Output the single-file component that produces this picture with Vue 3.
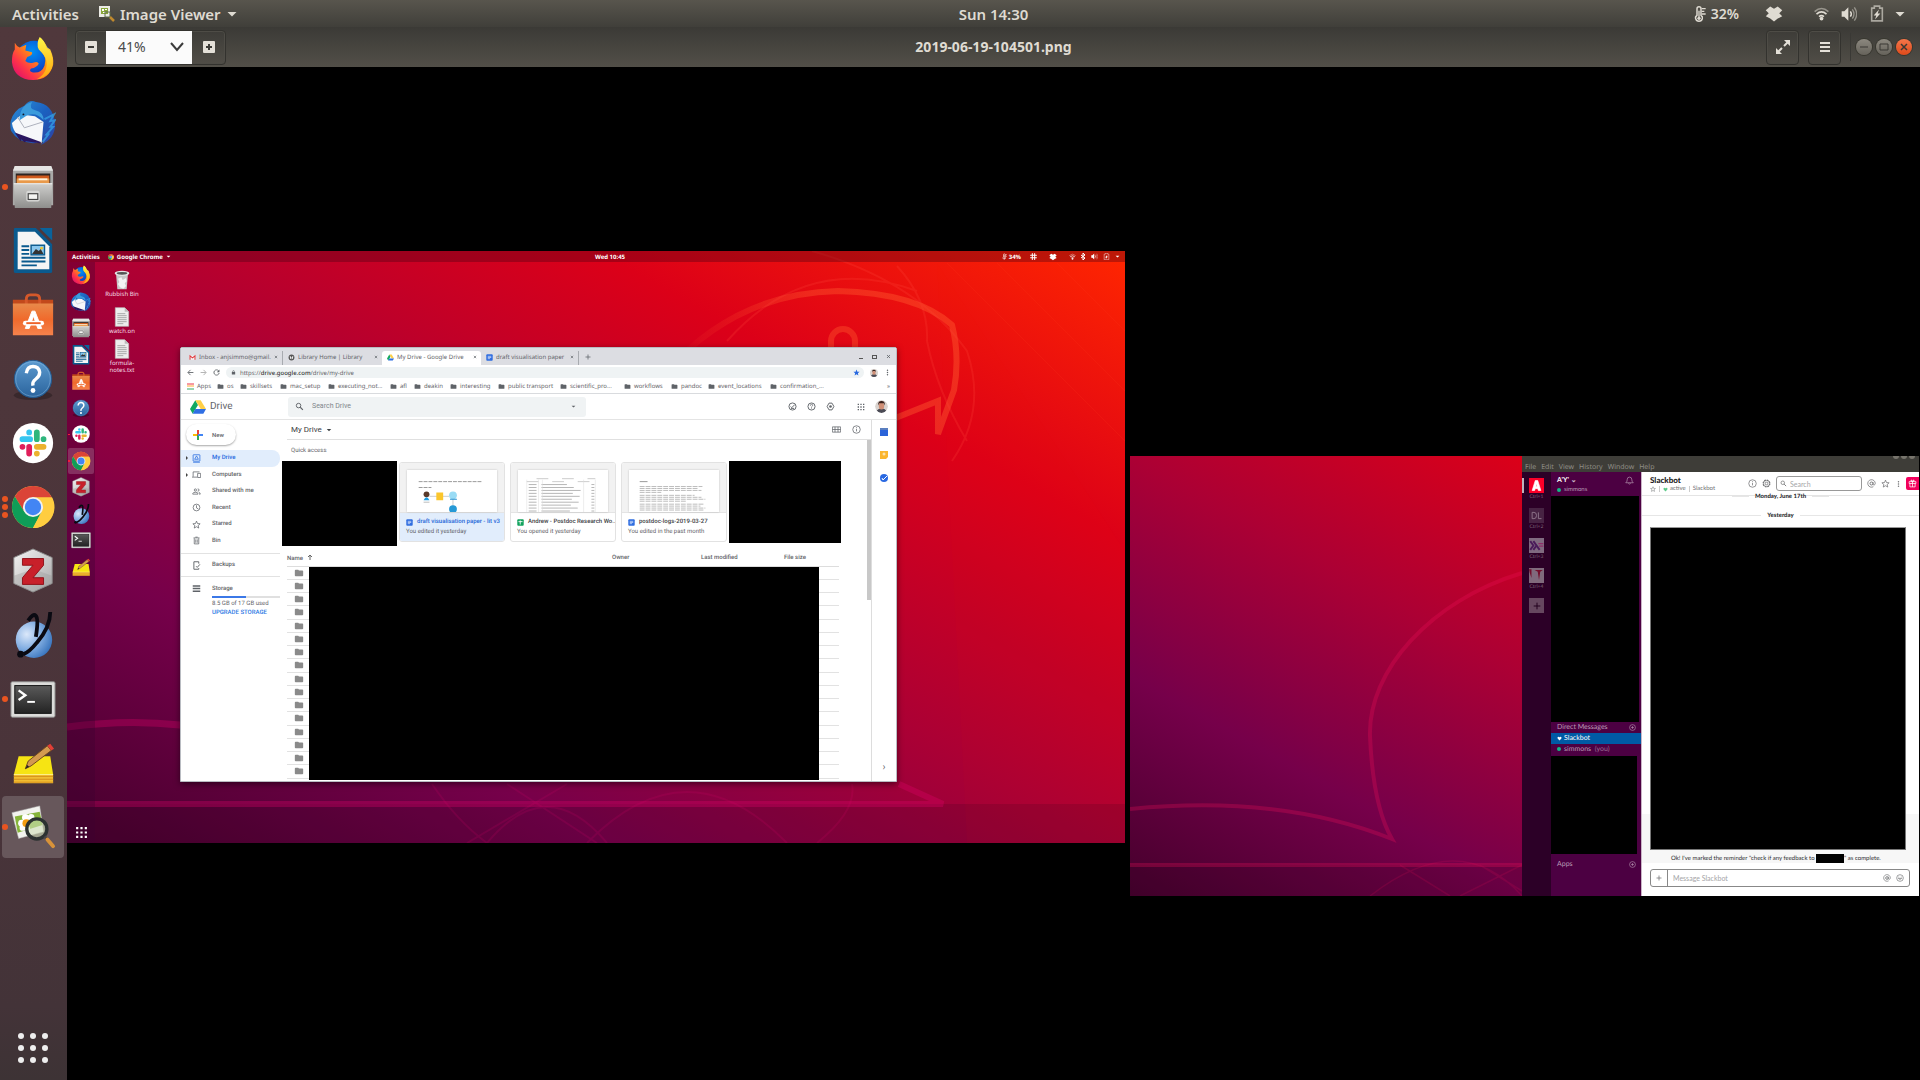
<script setup>
const dock = [
  { id: 'firefox', label: 'Firefox', dots: 0 },
  { id: 'thunderbird', label: 'Thunderbird', dots: 0 },
  { id: 'files', label: 'Files', dots: 1 },
  { id: 'writer', label: 'Writer', dots: 0 },
  { id: 'software', label: 'Software', dots: 0 },
  { id: 'help', label: 'Help', dots: 0 },
  { id: 'slack', label: 'Slack', dots: 0 },
  { id: 'chrome', label: 'Chrome', dots: 3 },
  { id: 'zotero', label: 'Zotero', dots: 0 },
  { id: 'yed', label: 'yEd', dots: 0 },
  { id: 'terminal', label: 'Terminal', dots: 1 },
  { id: 'notes', label: 'Notes', dots: 0 },
  { id: 'viewer', label: 'Image Viewer', dots: 1, active: true },
]
const innerDock = dock.slice(0, 12)
const bookmarks = ['os', 'skillsets', 'mac_setup', 'executing_not...', 'afl', 'deakin', 'interesting', 'public transport', 'scientific_pro...', 'workflows', 'pandoc', 'event_locations', 'confirmation_...']
const tabs = [
  { icon: 'gmail', text: 'Inbox - anjsimmo@gmail.', w: 102 },
  { icon: 'library', text: 'Library Home | Library', w: 99 },
  { icon: 'drive', text: 'My Drive - Google Drive', w: 99, active: true },
  { icon: 'gdoc', text: 'draft visualisation paper', w: 98 },
]
const navItems = [
  { icon: 'mydrive', text: 'My Drive', arrow: true, active: true },
  { icon: 'devices', text: 'Computers', arrow: true },
  { icon: 'people', text: 'Shared with me' },
  { icon: 'clock', text: 'Recent' },
  { icon: 'star', text: 'Starred' },
  { icon: 'bin', text: 'Bin' },
]
const cards = [
  { icon: 'gdoc', thumb: 'thumb1', title: 'draft visualisation paper - lit v3', sub: 'You edited it yesterday', active: true },
  { icon: 'gsheet', thumb: 'thumb2', title: 'Andrew - Postdoc Research Wo...', sub: 'You opened it yesterday' },
  { icon: 'gdoc', thumb: 'thumb3', title: 'postdoc-logs-2019-03-27', sub: 'You edited in the past month' },
]
const teams = [
  { id: 'team-a', key: 'Ctrl+1', active: true },
  { id: 'team-dl', key: 'Ctrl+2' },
  { id: 'team-x', key: 'Ctrl+3' },
  { id: 'team-t', key: 'Ctrl+4' },
]
const sheetRows = [...Array(10).keys()]
const proseRows = [
  { y: 24, w: 64 }, { y: 26, w: 60 }, { y: 28, w: 63 }, { y: 30, w: 22 },
  { y: 33, w: 56 }, { y: 35, w: 63 }, { y: 37, w: 67 }, { y: 39, w: 48 },
  { y: 42, w: 66 }, { y: 44, w: 62 }, { y: 46, w: 67 }, { y: 48, w: 65 },
]
</script>

<template>
  <div class="shell">
    <svg class="sprite" aria-hidden="true">
      <defs>
        <linearGradient id="gFox" x1="1" y1="0" x2="0" y2="1"><stop offset="0" stop-color="#fff44f" /><stop offset=".4" stop-color="#ff980e" /><stop offset=".7" stop-color="#ff3647" /><stop offset="1" stop-color="#d5007a" /></linearGradient>
        <linearGradient id="gFlame" x1="0" y1="0" x2="0" y2="1"><stop offset="0" stop-color="#fff848" /><stop offset="1" stop-color="#ffa40e" /></linearGradient>
        <radialGradient id="gGlobe" cx=".45" cy=".3" r=".8"><stop offset="0" stop-color="#0090f5" /><stop offset=".6" stop-color="#0a50d0" /><stop offset="1" stop-color="#311088" /></radialGradient>
        <linearGradient id="gBird" x1="0" y1="0" x2="1" y2="1"><stop offset="0" stop-color="#2b8fd8" /><stop offset=".5" stop-color="#1b60bf" /><stop offset="1" stop-color="#2f3fa0" /></linearGradient>
        <linearGradient id="gMetal" x1="0" y1="0" x2="0" y2="1"><stop offset="0" stop-color="#d0d0ce" /><stop offset="1" stop-color="#8e8e8c" /></linearGradient>
        <linearGradient id="gBag" x1="0" y1="0" x2="0" y2="1"><stop offset="0" stop-color="#e88a4a" /><stop offset=".5" stop-color="#f06a2c" /><stop offset="1" stop-color="#f5824c" /></linearGradient>
        <linearGradient id="gHelp" x1="0" y1="0" x2="0" y2="1"><stop offset="0" stop-color="#5c9bd0" /><stop offset="1" stop-color="#2a639c" /></linearGradient>
        <linearGradient id="gHex" x1="0" y1="0" x2="1" y2="1"><stop offset="0" stop-color="#f4f4f4" /><stop offset="1" stop-color="#a9a9a9" /></linearGradient>
        <radialGradient id="gBall" cx=".3" cy=".35" r=".8"><stop offset="0" stop-color="#dbe8fa" /><stop offset=".5" stop-color="#82aee2" /><stop offset="1" stop-color="#2e6cb8" /></radialGradient>
        <linearGradient id="gTerm" x1="0" y1="0" x2="0" y2="1"><stop offset="0" stop-color="#5a5a5a" /><stop offset="1" stop-color="#232323" /></linearGradient>
        <linearGradient id="gHead" x1="0" y1="0" x2="1" y2="0"><stop offset="0" stop-color="#ff5a2e" stop-opacity="0" /><stop offset=".5" stop-color="#ff5a2e" stop-opacity=".4" /><stop offset="1" stop-color="#ff5a2e" stop-opacity=".45" /></linearGradient>
      </defs>
      <symbol id="firefox" viewBox="0 0 48 48">
        <circle cx="25" cy="24" r="19" fill="url(#gGlobe)" />
        <path d="M5 7q2 4 5 5l7-3-1 6 7 2q1 3-5 5l-2 4q3 3 8 2 5-2 6 1-2 4-8 5-3 3 2 4 9 1 12-7 3-9-4-15Q27 8 31 2q5 3 8 10l3 2q4 9 3 16-4 16-21 16Q4 45 2 27q0-9 3-13z" fill="url(#gFox)" />
        <path d="M31 1q4 2 7 11l4 4q6 14-1 22-5 6-13 7 12-7 10-19-1-6-8-12-3-6 1-13z" fill="url(#gFlame)" />
      </symbol>
      <symbol id="thunderbird" viewBox="0 0 48 48">
        <path d="M15 6Q20-1 27 2 45 4 47 24q1 16-15 23l4-5q-5 3-12 3Q8 44 1 32-2 18 9 9z" fill="url(#gBird)" />
        <path d="M9 38q-6-6-7-14l10-9 14 2 9 6-2 22-10-2-14-5z" fill="#f6f7fa" />
        <path d="M5 34l28 10-2 1-14-2-2 1-3-3-1 2z" fill="#2a1660" />
        <path d="M8 18l7 11 19-6" fill="none" stroke="#aaaeba" />
        <path d="M10 21q0-16 13-19-4 7 4 9 8 2 8 10-8-9-17-5z" fill="#3b9bdc" />
        <circle cx="14" cy="15" r="1" fill="#112" />
        <path d="M36 20l10-5-4 7 5-1-5 7 3 0-7 8 2 0-6 8" fill="none" stroke="#35a7e8" stroke-width="2" opacity=".7" />
      </symbol>
      <symbol id="files" viewBox="0 0 48 48">
        <path d="M5 2h38l2 6v35H3V8z" fill="#a9a9a7" /><path d="M5 2h38l2 5H3z" fill="#e6e6e4" />
        <path d="M6 10h36v12H6z" fill="#2d2522" /><path d="M7 12h34v10H7z" fill="#cf5a1d" /><path d="M7 15h34v7H7z" fill="#e9994a" /><path d="M9 15h30v2H9z" fill="#fff4dc" />
        <path d="M4 20h40l-1 26H5z" fill="url(#gMetal)" /><path d="M4 20h40v1H4z" fill="#eee" />
        <rect x="17" y="28" width="14" height="11" rx="2" fill="#d8d8d6" /><rect x="19" y="31" width="10" height="6" fill="#f4f4f2" stroke="#444" stroke-width="1.2" />
      </symbol>
      <symbol id="writer" viewBox="0 0 48 48">
        <path d="M5 0h22l17 17v28q0 2-2 2H6q-2 0-2-2V2q0-2 1-2z" fill="#0a5a8e" /><path d="M31 0h13v13z" fill="#0a639b" />
        <path d="M8 4h18l15 15v24H8z" fill="#f5f5f5" />
        <path d="M12 19h8M12 23h8M12 27h8M12 31h25M12 35h25M12 39h16" stroke="#0a5a8e" stroke-width="2" />
        <rect x="22" y="18" width="14" height="10" fill="#8ac7ee" stroke="#0a5a8e" stroke-width="1.5" /><path d="M23 27l4-5 3 2 2-2 3 5z" fill="#333" /><circle cx="33" cy="21" r="1.5" fill="#e9c533" />
      </symbol>
      <symbol id="software" viewBox="0 0 48 48">
        <path d="M3 8h42v6H3z" fill="#c2491b" /><path d="M17 15V8q0-5 4-5h6q4 0 4 5v7" fill="none" stroke="#d5582a" stroke-width="3" />
        <path d="M3 12h42v33H3z" fill="url(#gBag)" />
        <path d="M16 38l7-18h3l7 18h-4l-4.500-13L20 38zM15 32h19" fill="#fff" stroke="#fff" /><path d="M16 32.500h17" stroke="#fff" stroke-width="5" stroke-linecap="round" /><path d="M17 32.500h15" stroke="#ee6228" stroke-width="2" />
      </symbol>
      <symbol id="help" viewBox="0 0 48 48">
        <ellipse cx="24" cy="41" rx="20" ry="5" fill="#000" opacity=".25" /><circle cx="24" cy="24" r="19.500" fill="url(#gHelp)" stroke="#22588c" /><circle cx="24" cy="24" r="18" fill="none" stroke="#8db9dd" opacity=".5" />
        <path d="M17 18q1-7 7-7t7 6q0 4-4 7t-3 7" fill="none" stroke="#fff" stroke-width="3.500" /><circle cx="24" cy="36" r="2.500" fill="#fff" />
      </symbol>
      <symbol id="slack" viewBox="0 0 48 48">
        <circle cx="24" cy="24" r="21" fill="#fff" />
        <g fill="none" stroke-width="6" stroke-linecap="round"><path d="M13 20h8M20 13v0" stroke="#36c5f0" /><path d="M28 13v7M35 20v0" stroke="#2eb67d" /><path d="M35 28h-7M28 35v0" stroke="#ecb22e" /><path d="M20 35v-7M13 28v0" stroke="#e01e5a" /></g>
      </symbol>
      <symbol id="chrome" viewBox="0 0 48 48">
        <circle cx="24" cy="24" r="22" fill="#ffcd40" /><path d="M24 14h19.600A22 22 0 0 0 5 13l10 16z" fill="#db4437" /><path d="M5 13a22 22 0 0 0 19 33l9-17H15z" fill="#0f9d58" />
        <path d="M24 14h20a22 22 0 0 1-20 32l9-17z" fill="#ffcd40" /><circle cx="24" cy="24" r="10.500" fill="#f1f1f1" /><circle cx="24" cy="24" r="8.500" fill="#4285f4" />
      </symbol>
      <symbol id="zotero" viewBox="0 0 48 48">
        <path d="M24 1l20 9v27L24 46 4 37V10z" fill="url(#gHex)" stroke="#888" /><path d="M4 29l20-7 20 7v8l-20 9-20-9z" fill="#999" opacity=".35" />
        <path d="M13 11h22v7L24 31h11v7H13v-7l11-13H13z" fill="#c8202a" stroke="#8f1118" />
      </symbol>
      <symbol id="yed" viewBox="0 0 48 48">
        <circle cx="25" cy="29" r="19" fill="url(#gBall)" /><path d="M19 9q5-8 8-5 3 3 0 22M42 0q0 16-14 32-8 10-14 12" fill="none" stroke="#0a0a12" stroke-width="4" /><circle cx="11" cy="44" r="3.500" fill="#0a0a12" />
      </symbol>
      <symbol id="terminal" viewBox="0 0 48 48">
        <rect x="1" y="6" width="46" height="37" rx="1.500" fill="#dcdcda" stroke="#888" /><rect x="5" y="10" width="38" height="29" fill="url(#gTerm)" stroke="#111" /><path d="M9 15l7 5-7 5" fill="none" stroke="#fff" stroke-width="2.500" /><path d="M18 27h8" stroke="#fff" stroke-width="2" />
      </symbol>
      <symbol id="notes" viewBox="0 0 48 48">
        <path d="M9 17h33l3 19H4z" fill="#f6e413" /><path d="M4 36h41v9H4z" fill="#f0bd32" /><path d="M4 38h41M4 41h41M4 44h41" stroke="#d58f1c" /><path d="M4 36h41" stroke="#fff38a" />
        <path d="M16 30l3-8L39 6l4 5-21 16z" fill="#d39a50" stroke="#6b451c" /><path d="M39 6l3-2 4 5-3 2z" fill="#e33f36" /><path d="M16 30l2-4 2 2z" fill="#222" />
      </symbol>
      <symbol id="viewer" viewBox="0 0 48 48">
        <path d="M2 9L31 2l4 27L9 36z" fill="#f3f3ef" stroke="#bbb" stroke-width=".5" /><path d="M5 13l26-5 3 14L8 30z" fill="#86b43a" />
        <g fill="#fff"><circle cx="12" cy="20" r="3.500" /><circle cx="16" cy="14" r="3.500" /><circle cx="22" cy="14" r="3.500" /><circle cx="13" cy="25" r="3" /><circle cx="18" cy="26" r="3" /></g><circle cx="17" cy="20" r="4" fill="#f39c12" />
        <circle cx="28" cy="26" r="10.500" fill="#cfe0b8" fill-opacity=".6" stroke="#2c3231" stroke-width="3.500" /><path d="M36 34l3 3" stroke="#444" stroke-width="3" /><path d="M39 37l6 7" stroke="#d8933a" stroke-width="4" stroke-linecap="round" />
      </symbol>
      <symbol id="viewer-small" viewBox="0 0 16 16"><path d="M0 0h11v11H0z" fill="#ecece6" /><path d="M2 2h7v6H2z" fill="#8aa83a" /><path d="M3 3h2v2H3zM6 3h2v1H6zM4 6h3v1H4z" fill="#fff" /><path d="M6 6h5v5H6z" fill="none" stroke="#5d6a4a" /><path d="M11 11l4 4" stroke="#c08a2e" stroke-width="2.500" /></symbol>
      <symbol id="gmail" viewBox="0 0 24 24"><path d="M2 5h20v15H2z" fill="#f3f0f0" /><path d="M3.500 20V6l8.500 7 8.500-7v14" fill="none" stroke="#e0393e" stroke-width="3.500" /></symbol>
      <symbol id="library" viewBox="0 0 24 24"><circle cx="12" cy="12" r="10" fill="#555" /><path d="M6 6l5 4v8l-4-3zM18 6l-5 4v8l4-3z" fill="#eee" /></symbol>
      <symbol id="drive" viewBox="0 0 24 24"><path d="M8 2l4 7-8 13-4-7z" fill="#11a960" /><path d="M8 2h8l8 13h-8z" fill="#ffcf47" /><path d="M8 15h16l-4 7H4z" fill="#2f6fe4" /></symbol>
      <symbol id="gdoc" viewBox="0 0 24 24"><rect x="1" y="1" width="22" height="22" rx="3" fill="#2f6de0" /><path d="M6 8h12M6 12h12M6 16h8" stroke="#fff" stroke-width="2" /></symbol>
      <symbol id="gsheet" viewBox="0 0 24 24"><rect x="1" y="1" width="22" height="22" rx="3" fill="#11a25d" /><path d="M5 9h14M11 5v14" stroke="#fff" stroke-width="3" /></symbol>
      <symbol id="folder" viewBox="0 0 24 24"><path d="M10 4H4a2 2 0 0 0-2 2v12a2 2 0 0 0 2 2h16a2 2 0 0 0 2-2V8a2 2 0 0 0-2-2h-8z" fill="currentColor" /></symbol>
      <symbol id="close" viewBox="0 0 24 24"><path d="M5 5l14 14M19 5L5 19" stroke="currentColor" stroke-width="4" /></symbol>
      <symbol id="plus" viewBox="0 0 24 24"><path d="M12 2v20M2 12h20" stroke="currentColor" stroke-width="3" /></symbol>
      <symbol id="back" viewBox="0 0 24 24"><path d="M22 12H4M12 3l-9 9 9 9" fill="none" stroke="currentColor" stroke-width="3" /></symbol>
      <symbol id="reload" viewBox="0 0 24 24"><path d="M19 6a9 9 0 1 0 2 8" fill="none" stroke="currentColor" stroke-width="3" /><path d="M22 2v9h-9z" fill="currentColor" /></symbol>
      <symbol id="lock" viewBox="0 0 24 24"><path d="M4 10h16v12H4z" fill="currentColor" /><path d="M8 11V7a4 4 0 0 1 8 0v4" fill="none" stroke="currentColor" stroke-width="3" /></symbol>
      <symbol id="search" viewBox="0 0 24 24"><circle cx="9.500" cy="9.500" r="6" fill="none" stroke="currentColor" stroke-width="2.500" /><path d="M14 14l7 7" stroke="currentColor" stroke-width="3" /></symbol>
      <symbol id="starfill" viewBox="0 0 24 24"><path d="M12 2l3 7 7.500.6-5.700 5 1.700 7.400-6.500-4-6.500 4 1.700-7.400-5.700-5L9 9z" fill="currentColor" /></symbol>
      <symbol id="star" viewBox="0 0 24 24"><path d="M12 3l2.700 6.500 7 .6-5.300 4.600 1.600 6.800-6-3.600-6 3.600 1.600-6.800-5.300-4.600 7-.6z" fill="none" stroke="currentColor" stroke-width="2" /></symbol>
      <symbol id="dots" viewBox="0 0 24 24"><g fill="currentColor"><circle cx="12" cy="4" r="2.500" /><circle cx="12" cy="12" r="2.500" /><circle cx="12" cy="20" r="2.500" /></g></symbol>
      <symbol id="grid" viewBox="0 0 24 24"><path d="M4 2v20M12 2v20M20 2v20" stroke="currentColor" stroke-width="4" stroke-dasharray="4 4" /></symbol>
      <symbol id="caret" viewBox="0 0 24 24"><path d="M3 8h18l-9 9z" fill="currentColor" /></symbol>
      <symbol id="mydrive" viewBox="0 0 24 24"><rect x="3" y="2" width="18" height="17" rx="1" fill="none" stroke="currentColor" stroke-width="2" /><path d="M3 22h18" stroke="currentColor" stroke-width="2" /><path d="M12 5l5 9H7z" fill="none" stroke="currentColor" stroke-width="2" /></symbol>
      <symbol id="devices" viewBox="0 0 24 24"><path d="M3 18V5h17M0 19h14M15 9h8v11h-8z" fill="none" stroke="currentColor" stroke-width="2" /></symbol>
      <symbol id="people" viewBox="0 0 24 24"><path d="M2 19v-2q2-3 7-3t7 3v2z" fill="none" stroke="currentColor" stroke-width="2" /><circle cx="9" cy="8" r="3" fill="none" stroke="currentColor" stroke-width="2" /><path d="M15 5q4 0 4 3t-4 3M18 14q4 1 4 5h-3" fill="none" stroke="currentColor" stroke-width="2" /></symbol>
      <symbol id="clock" viewBox="0 0 24 24"><circle cx="12" cy="12" r="9" fill="none" stroke="currentColor" stroke-width="2" /><path d="M12 6v7l5 3" fill="none" stroke="currentColor" stroke-width="2" /></symbol>
      <symbol id="bin" viewBox="0 0 24 24"><path d="M6 6v15h12V6M4 5h16M9 3h6M10 9v9M14 9v9" fill="none" stroke="currentColor" stroke-width="2" /></symbol>
      <symbol id="backup" viewBox="0 0 24 24"><path d="M18 7V2H5v20h13v-3M11 14l3 3 7-8" fill="none" stroke="currentColor" stroke-width="2.500" /></symbol>
      <symbol id="storage" viewBox="0 0 24 24"><path d="M2 5h20M2 12h20M2 19h20" stroke="currentColor" stroke-width="4" /></symbol>
      <symbol id="check" viewBox="0 0 24 24"><circle cx="12" cy="12" r="9.500" fill="none" stroke="currentColor" stroke-width="2.500" /><path d="M7 12l3 3 8-8M8 17h8" fill="none" stroke="currentColor" stroke-width="2.500" /></symbol>
      <symbol id="question" viewBox="0 0 24 24"><circle cx="12" cy="12" r="9.500" fill="none" stroke="currentColor" stroke-width="2.500" /><path d="M9 10q0-4 3-4t3 3q0 2-3 4v2M12 17v2" fill="none" stroke="currentColor" stroke-width="2" /></symbol>
      <symbol id="gear" viewBox="0 0 24 24"><path d="M8 3h8l5 9-5 9H8l-5-9z" fill="none" stroke="currentColor" stroke-width="2.500" stroke-linejoin="round" /><circle cx="12" cy="12" r="3.500" fill="currentColor" /></symbol>
      <symbol id="gear-open" viewBox="0 0 24 24"><circle cx="12" cy="12" r="9" fill="none" stroke="currentColor" stroke-width="3" stroke-dasharray="4.700 2.300" /><circle cx="12" cy="12" r="8" fill="none" stroke="currentColor" stroke-width="1.500" /><circle cx="12" cy="12" r="3.500" fill="none" stroke="currentColor" stroke-width="2" /></symbol>
      <symbol id="hash" viewBox="0 0 24 24"><path d="M8 2v20M16 2v20M2 8h20M2 16h20" stroke="currentColor" stroke-width="3.500" stroke-linecap="round" /></symbol>
      <symbol id="info" viewBox="0 0 24 24"><circle cx="12" cy="12" r="10" fill="none" stroke="currentColor" stroke-width="2" /><path d="M12 10v7M12 6v2" stroke="currentColor" stroke-width="2" /></symbol>
      <symbol id="table" viewBox="0 0 24 24"><path d="M1 5h22v14H1zM1 12h22M8 5v14M16 5v14" fill="none" stroke="currentColor" stroke-width="2" /></symbol>
      <symbol id="face" viewBox="0 0 24 24"><circle cx="12" cy="12" r="12" fill="#d9d3cf" /><path d="M3 20q3-5 9-5t9 5q-4 4-9 4t-9-4z" fill="#4a4a55" /><ellipse cx="12" cy="11" rx="5" ry="6.500" fill="#d08f76" /><path d="M6 10q-1-8 6-8t6 8l-2-4H8z" fill="#3a211c" /></symbol>
      <symbol id="at" viewBox="0 0 24 24"><circle cx="12" cy="12" r="4" fill="none" stroke="currentColor" stroke-width="2.500" /><path d="M16 8v6q0 2 3 2 3-1 3-4a10 10 0 1 0-5 8.500" fill="none" stroke="currentColor" stroke-width="2" /></symbol>
      <symbol id="smile" viewBox="0 0 24 24"><circle cx="12" cy="12" r="10" fill="none" stroke="currentColor" stroke-width="2" /><path d="M7 13q5 7 10 0zM8 8v2M16 8v2" fill="none" stroke="currentColor" stroke-width="2" /></symbol>
      <symbol id="pluscircle" viewBox="0 0 24 24"><circle cx="12" cy="12" r="10" fill="none" stroke="currentColor" stroke-width="2" /><path d="M12 7v10M7 12h10" stroke="currentColor" stroke-width="2" /></symbol>
      <symbol id="heart" viewBox="0 0 24 24"><path d="M12 21L3 12Q0 4 7 4q4 0 5 3 1-3 5-3 7 0 4 8z" fill="currentColor" /></symbol>
      <symbol id="bell" viewBox="0 0 24 24"><path d="M2 18q4-3 4-9 0-6 6-6t6 6q0 6 4 9zM9 20q3 3 6 0" fill="none" stroke="currentColor" stroke-width="1.800" /></symbol>
      <symbol id="gift" viewBox="0 0 24 24"><path d="M3 7h18v5H3zM5 12v9h14v-9M12 7v14M12 7Q6 6 8 3q3-1 4 4 1-5 4-4 2 3-4 4" fill="none" stroke="currentColor" stroke-width="2" /></symbol>
      <symbol id="dropbox" viewBox="0 0 24 24"><path d="M7 2l5 3 5-3 6 5-4 4 4 4-6 3-5 4-5-4-6-3 4-4-4-4z" fill="currentColor" /></symbol>
      <symbol id="wifi" viewBox="0 0 24 24"><g fill="none" stroke="currentColor" stroke-width="2.600"><path d="M1 9q11-10 22 0" opacity=".5" /><path d="M4 13q8-7 16 0" /><path d="M8 17q4-3 8 0" /></g><circle cx="12" cy="20" r="3" fill="currentColor" /></symbol>
      <symbol id="sound" viewBox="0 0 24 24"><path d="M1 8h4l6-6v20l-6-6H1z" fill="currentColor" /><path d="M14 8q3 4 0 8" fill="none" stroke="currentColor" stroke-width="2.200" /><path d="M17 5q5 7 0 14M20 2q7 10 0 20" fill="none" stroke="currentColor" stroke-width="2" opacity=".5" /></symbol>
      <symbol id="battery" viewBox="0 0 24 24"><path d="M4 4h4V1h8v3h4v19H4z" fill="none" stroke="currentColor" stroke-width="2.400" opacity=".65" /><path d="M15 6l-8 9h4l-2 6 8-9h-4z" fill="currentColor" /></symbol>
      <symbol id="thermo" viewBox="0 0 24 24"><path d="M6 14V4q0-3 3-3t3 3v10q3 2 2 5-1 4-5 4t-5-4q-1-3 2-5z" fill="none" stroke="currentColor" stroke-width="2.200" /><circle cx="9" cy="18.500" r="2.500" fill="currentColor" /><path d="M9 7v10" stroke="currentColor" stroke-width="2" /><path d="M13 4h6M13 8h4M13 12h6" stroke="currentColor" stroke-width="2" /></symbol>
      <symbol id="doc" viewBox="0 0 24 30"><path d="M2 1h14l6 6v22H2z" fill="#ededed" stroke="#bbb" /><path d="M16 1v6h6z" fill="#bbb" /><path d="M5 10h12M5 13h14M5 16h14M5 19h14M5 22h14M5 25h9" stroke="#aaa" stroke-width="1.500" /></symbol>
      <symbol id="trash" viewBox="0 0 24 30"><path d="M3 5h18l-2 24H5z" fill="#c9c9c9" /><path d="M6 13l5-2 2 4 5-3 1 5-3 3 2 4-4 4-5-2-3-5 2-3z" fill="#f4f4f4" /><ellipse cx="12" cy="5" rx="11" ry="4" fill="#e5e5e5" /><ellipse cx="12" cy="5" rx="8" ry="2" fill="#555" /></symbol>
      <symbol id="team-a" viewBox="0 0 24 24"><rect width="24" height="24" fill="#fb0028" /><path d="M5 20L10 4h4l5 16h-4l-1-3h-4l-1 3zM11 13h2l-1-4z" fill="#fff" stroke="#fff" /></symbol>
      <symbol id="team-dl" viewBox="0 0 24 24"><rect width="24" height="24" fill="#472343" /><path d="M5 7v10h3q4 0 4-5t-4-5zM15 7v10h5" fill="none" stroke="#90768c" stroke-width="1.500" /></symbol>
      <symbol id="team-x" viewBox="0 0 24 24"><rect width="24" height="24" fill="#806a80" /><path d="M2 5l5 7-5 7M7 5l10 14M12 12l-5 7" fill="none" stroke="#4a1a5a" stroke-width="3" /><path d="M15 9h8M16 13h7" stroke="#8e2c68" stroke-width="2" /></symbol>
      <symbol id="team-t" viewBox="0 0 24 24"><rect width="24" height="24" fill="#806a7c" /><path d="M0 2h4v14l-3-9M9 3h13l-4 3-2 13-2-13z" fill="#73102c" /></symbol>
      <symbol id="thumb1" viewBox="0 0 106 50">
        <path d="M19 19h65M19 25h13" stroke="#999" stroke-width="1" stroke-dasharray="4 1" /><path d="M30 34h20M54 36v10" stroke="#ccc" />
        <circle cx="27" cy="32" r="3" fill="#5b3a2a" /><path d="M24 38q3-6 6 0z" fill="#1b9be0" /><path d="M24 40h6" stroke="#bbb" />
        <path d="M37 30h7v8h-7z" fill="#fbc62c" /><circle cx="54" cy="33" r="4" fill="#9adcf5" /><path d="M51 37h7" stroke="#268fcf" /><circle cx="54" cy="47" r="4" fill="#2699d6" />
      </symbol>
    </svg>

    <header class="topbar">
      <div class="top-left">
        <button class="plain">Activities</button>
        <button class="plain app-menu">
          <svg width="16" height="16"><use href="#viewer-small" /></svg>Image Viewer<svg width="12" height="12"><use href="#caret" /></svg>
        </button>
      </div>
      <time class="clock">Sun 14:30</time>
      <div class="top-right">
        <svg width="16" height="18"><use href="#thermo" /></svg><span class="temp">32%</span>
        <svg class="dbx" width="20" height="18"><use href="#dropbox" /></svg>
        <svg width="15" height="15"><use href="#wifi" /></svg>
        <svg width="16" height="16"><use href="#sound" /></svg>
        <svg width="16" height="17"><use href="#battery" /></svg>
        <svg class="sys" width="12" height="12"><use href="#caret" /></svg>
      </div>
    </header>

    <div class="workspace">
      <nav class="dock" aria-label="Dock">
        <button v-for="a in dock" :key="a.id" class="dock-item" :aria-label="a.label">
          <span class="tile" :class="{ on: a.active }">
            <span class="pips"><i v-for="n in a.dots" :key="n"></i></span>
            <svg width="46" height="46"><use :href="'#' + a.id" /></svg>
          </span>
        </button>
        <button class="apps" aria-label="Show Applications"><i v-for="n in 9" :key="n"></i></button>
      </nav>

      <section class="viewer">
        <div class="headbar">
          <div class="side">
            <div class="zoomgroup">
              <button aria-label="Zoom out"><span class="key"><b></b></span></button>
              <label class="zoomsel">
                <select aria-label="Zoom level"><option>41%</option></select>
                <svg width="14" height="10" viewBox="0 0 14 10"><path d="M1 1l6 7 6-7" fill="none" stroke="#3b3b3b" stroke-width="2" /></svg>
              </label>
              <button aria-label="Zoom in"><span class="key"><b></b><b class="v"></b></span></button>
            </div>
          </div>
          <h1>2019-06-19-104501.png</h1>
          <div class="side end">
            <button class="hb" aria-label="Fullscreen"><svg width="14" height="14" viewBox="0 0 14 14"><path d="M8 0h6v6zM0 8v6h6z" fill="#e4e0d8" /><path d="M12 2L8 6M6 8l-4 4" stroke="#e4e0d8" stroke-width="2" /></svg></button>
            <button class="hb" aria-label="Menu"><svg width="10" height="11" viewBox="0 0 10 11"><path d="M0 1h10M0 5h10M0 9h10" stroke="#e4e0d8" stroke-width="2" /></svg></button>
            <div class="wm">
              <button aria-label="Minimize"><svg viewBox="0 0 16 16"><path d="M4 8h8" stroke="#3b3934" /></svg></button>
              <button aria-label="Maximize"><svg viewBox="0 0 16 16"><path d="M4 5h8v6H4z" fill="none" stroke="#3b3934" /></svg></button>
              <button class="x" aria-label="Close"><svg viewBox="0 0 16 16"><path d="M5 5l6 6M11 5l-6 6" stroke="#3b3934" stroke-width="1.500" /></svg></button>
            </div>
          </div>
        </div>

        <div class="canvas">
          <div class="screen left-screen">
            <svg class="art" viewBox="0 0 1058 592" preserveAspectRatio="none">
              <path d="M0 553H1058V592H0z" fill="#200018" opacity=".15" />
              <path d="M870 12L1058 300V592H900z" fill="#ff2000" opacity=".03" /><path d="M880 12L1058 190M930 12L1058 140M990 12L1058 80" stroke="#ff4020" opacity=".15" fill="none" />
              <g fill="none" stroke="url(#gHead)" stroke-width="6"><path d="M600 120Q670 42 771 40 850 42 885 74Q893 105 887 139L871 183V150L806 176" /></g>
              <path d="M764 104V90a12 12 0 0 1 24 0V104" fill="none" stroke="#ff5a2e" stroke-opacity=".4" stroke-width="6" />
              <g fill="none" stroke="#ff4a3a" stroke-opacity=".22"><path d="M745 0Q850 30 900 100 920 160 885 210M830 15Q862 50 860 90 870 140 900 190M660 90Q740 0 850 40" stroke-width="2" /></g>
              <g fill="none" stroke="#e0006a" stroke-opacity=".32"><path d="M0 476Q60 468 113 474 230 486 330 520" stroke-width="7" /><path d="M0 553H876L832 533" stroke-width="6" /><path d="M365 533Q390 570 420 592M400 592L500 533M420 592Q480 520 540 592M520 592Q620 490 720 592M750 592Q790 560 785 533M440 533L530 592" stroke-width="2" stroke-opacity=".15" /></g>
            </svg>
            <div class="mini-top">
              <span class="mt-l"><b>Activities</b><svg width="6" height="6"><use href="#chrome" /></svg><b>Google Chrome</b><svg width="5" height="5"><use href="#caret" /></svg></span>
              <b>Wed 10:45</b>
              <span class="mt-r"><svg width="6" height="7"><use href="#thermo" /></svg><b>34%</b><svg width="7" height="7"><use href="#hash" /></svg><i></i><svg width="8" height="8"><use href="#dropbox" /></svg><i></i><svg width="7" height="7"><use href="#wifi" /></svg><svg width="5" height="7" viewBox="0 0 5 7"><path d="M0 2l4 3-2 2V0l2 2-4 3" fill="none" stroke="#fff" /></svg><svg width="7" height="7"><use href="#sound" /></svg><svg width="7" height="7"><use href="#battery" /></svg><svg width="5" height="5"><use href="#caret" /></svg></span>
            </div>
            <div class="desk">
              <div class="mini-dock">
                <ul>
                  <li v-for="a in innerDock" :key="a.id" :class="{ sel: a.id === 'chrome', run: a.id === 'slack' || a.id === 'chrome' }"><svg width="20" height="20"><use :href="'#' + a.id" /></svg></li>
                </ul>
                <svg class="mini-apps" width="13" height="13"><use href="#grid" /></svg>
              </div>
              <div class="desk-icons">
                <div><svg width="16" height="20"><use href="#trash" /></svg><span>Rubbish Bin</span></div>
                <div><svg width="16" height="20"><use href="#doc" /></svg><span>watch.on</span></div>
                <div><svg width="16" height="20"><use href="#doc" /></svg><span>formula-<br />notes.txt</span></div>
              </div>
            </div>

            <div class="browser">
              <div class="tabs">
                <div v-for="t in tabs" :key="t.text" class="tab" :class="{ cur: t.active }" :style="{ width: t.w + 'px' }">
                  <svg width="7" height="7"><use :href="'#' + t.icon" /></svg><span>{{ t.text }}</span><svg width="4" height="4"><use href="#close" /></svg>
                </div>
                <button class="newtab" aria-label="New tab"><svg width="6" height="6"><use href="#plus" /></svg></button>
                <div class="wb"><i class="mn"></i><i class="mx"></i><svg width="5" height="5"><use href="#close" /></svg></div>
              </div>
              <div class="addr">
                <svg width="7" height="7"><use href="#back" /></svg><svg class="fwd" width="7" height="7"><use href="#back" /></svg><svg width="7" height="7"><use href="#reload" /></svg>
                <div class="pill"><svg width="5" height="5"><use href="#lock" /></svg><span>https://<b>drive.google.com</b>/drive/my-drive</span><svg class="bl" width="7" height="7"><use href="#starfill" /></svg></div>
                <svg width="8" height="8"><use href="#face" /></svg><svg width="7" height="7"><use href="#dots" /></svg>
              </div>
              <div class="marks">
                <a href="#"><svg width="7" height="7" viewBox="0 0 7 7"><path d="M0 1h7" stroke="#e34" /><path d="M0 3h7" stroke="#fa3" /><path d="M0 6h7" stroke="#3a6" /></svg>Apps</a>
                <a v-for="b in bookmarks" :key="b" href="#"><svg width="7" height="7"><use href="#folder" /></svg>{{ b }}</a>
                <span>»</span>
              </div>
              <div class="dhead">
                <svg width="16" height="16"><use href="#drive" /></svg><span class="brand">Drive</span>
                <label class="dsearch"><svg width="9" height="9"><use href="#search" /></svg><input placeholder="Search Drive" aria-label="Search Drive" /><svg width="5" height="5"><use href="#caret" /></svg></label>
                <div class="dicons"><svg width="9" height="9"><use href="#check" /></svg><svg width="9" height="9"><use href="#question" /></svg><svg width="9" height="9"><use href="#gear" /></svg></div>
                <svg width="8" height="8"><use href="#grid" /></svg><svg class="me" width="13" height="13"><use href="#face" /></svg>
              </div>
              <div class="dbody">
                <nav class="dnav">
                  <button class="new"><svg width="10" height="10" viewBox="0 0 10 10"><path d="M5 0v5" stroke="#ea4335" stroke-width="2" /><path d="M5 5v5" stroke="#34a853" stroke-width="2" /><path d="M0 5h4" stroke="#fbbc04" stroke-width="2" /><path d="M5 5h5" stroke="#4285f4" stroke-width="2" /></svg>New</button>
                  <ul>
                    <li v-for="n in navItems" :key="n.text" :class="{ act: n.active }"><i :class="{ arr: n.arrow }"></i><svg width="9" height="9"><use :href="'#' + n.icon" /></svg><a href="#">{{ n.text }}</a></li>
                  </ul>
                  <div class="nrow"><i></i><svg width="9" height="9"><use href="#backup" /></svg><a href="#">Backups</a></div>
                  <div class="nrow"><i></i><svg width="9" height="9"><use href="#storage" /></svg><a href="#">Storage</a></div>
                  <div class="quota"><progress value="8.5" max="17" aria-label="Storage used"></progress><span>8.5 GB of 17 GB used</span><a href="#">UPGRADE STORAGE</a></div>
                </nav>
                <main class="dmain">
                  <div class="crumb"><button>My Drive<svg width="6" height="6"><use href="#caret" /></svg></button><svg width="9" height="9"><use href="#table" /></svg><svg width="9" height="9"><use href="#info" /></svg></div>
                  <h2>Quick access</h2>
                  <div class="quick">
                    <div class="blk b1"></div>
                    <div class="cards">
                      <article v-for="c in cards" :key="c.title" :class="{ act: c.active }">
                        <div class="thumb"><div class="page"></div>
                          <svg v-if="c.thumb === 'thumb1'" viewBox="0 0 106 50"><use href="#thumb1" /></svg>
                          <svg v-else-if="c.thumb === 'thumb2'" viewBox="0 0 106 50"><path d="M26 16h60M16 19h70" stroke="#ccc" stroke-dasharray="12 14" /><g v-for="r in sheetRows" :key="r" stroke="#b5b5b5"><path :d="`M18 ${22 + r * 3}h8M31 ${22 + r * 3}h${26 + (r * 7) % 15}M82 ${22 + r * 3}h3`" /></g><path d="M16 17v33M28 17v33M32 17v33M74 17v33M86 17v33" stroke="#ddd" stroke-width=".5" /></svg>
                          <svg v-else viewBox="0 0 106 50"><path d="M18 19h8" stroke="#999" /><path v-for="p in proseRows" :key="p.y" :d="`M18 ${p.y}h${p.w}`" stroke="#bbb" stroke-dasharray="5 1" /></svg>
                        </div>
                        <div class="cap"><p><svg width="7" height="7"><use :href="'#' + c.icon" /></svg><b>{{ c.title }}</b></p><small>{{ c.sub }}</small></div>
                      </article>
                    </div>
                    <div class="blk b2"></div>
                  </div>
                  <div class="list">
                    <table>
                      <thead><tr><th>Name <svg width="6" height="6" viewBox="0 0 6 6"><path d="M3 6V1M1 3l2-2 2 2" fill="none" stroke="#666" /></svg></th><th>Owner</th><th>Last modified</th><th>File size</th></tr></thead>
                      <tbody><tr v-for="r in 16" :key="r"><td><svg width="10" height="10"><use href="#folder" /></svg></td><td></td><td></td><td></td></tr></tbody>
                    </table>
                    <div class="mask"></div>
                  </div>
                  <div class="thumbbar"></div>
                </main>
                <aside class="dside">
                  <svg width="8" height="8" viewBox="0 0 8 8"><path d="M0 1h8v7H0z" fill="#2b63d9" /><path d="M0 0h8v2H0z" fill="#5a7fc0" /></svg>
                  <svg width="8" height="8" viewBox="0 0 8 8"><path d="M0 0h8v6L6 8H0z" fill="#fbb62e" /><circle cx="4" cy="3" r="1.500" fill="#fff" opacity=".6" /></svg>
                  <svg width="8" height="8" viewBox="0 0 8 8"><circle cx="4" cy="4" r="4" fill="#2a69e2" /><path d="M2 4l1 2 4-4" fill="none" stroke="#fff" /></svg>
                  <span>›</span>
                </aside>
              </div>
            </div>
          </div>

          <div class="screen right-screen">
            <svg class="art" viewBox="0 0 789 440" preserveAspectRatio="none">
              <path d="M0 409H789V440H0z" fill="#200018" opacity=".15" />
              <g fill="none" stroke="#f0105a" stroke-opacity=".28" stroke-width="4"><path d="M392 117C300 145 238 215 240 280Q243 350 262 383Q150 338 0 353M0 409H392" /></g>
              <g fill="none" stroke="#f0105a" stroke-opacity=".15" stroke-width="1.500"><path d="M240 440Q330 370 392 440M270 409L320 440M330 440L392 409M350 409L392 435" /></g>
            </svg>
            <div class="slackwin">
              <div class="smenu"><span class="stitle">Slack - A Y</span><div class="swm"><i></i><i></i><i></i></div><ul><li>File</li><li>Edit</li><li>View</li><li>History</li><li>Window</li><li>Help</li></ul></div>
              <div class="sbody">
                <div class="teams">
                  <div v-for="t in teams" :key="t.id" :class="{ cur: t.active }"><svg width="15" height="15"><use :href="'#' + t.id" /></svg><span>{{ t.key }}</span></div>
                  <button aria-label="Add workspace"><svg width="8" height="8"><use href="#plus" /></svg></button>
                </div>
                <div class="channels">
                  <div class="who"><div><b>A'Y' <em>⌄</em></b><svg width="9" height="9"><use href="#bell" /></svg></div><p><i class="dot"></i>simmons</p></div>
                  <div class="cmask m1"></div>
                  <div class="ch head"><span>Direct Messages</span><svg width="7" height="7"><use href="#pluscircle" /></svg></div>
                  <div class="ch bot"><svg width="5" height="5"><use href="#heart" /></svg><span>Slackbot</span></div>
                  <div class="ch"><i class="dot"></i><span>simmons &nbsp;<em>(you)</em></span></div>
                  <div class="cmask m2"></div>
                  <div class="ch head appsrow"><span>Apps</span><svg width="7" height="7"><use href="#pluscircle" /></svg></div>
                </div>
                <div class="chat">
                  <div class="chead">
                    <div class="ct"><b>Slackbot</b><p><svg width="6" height="6"><use href="#star" /></svg><u></u><svg class="gr" width="5" height="5"><use href="#heart" /></svg>active<u></u>Slackbot</p></div>
                    <svg width="9" height="9"><use href="#info" /></svg><svg width="9" height="9"><use href="#gear-open" /></svg>
                    <label><svg width="7" height="7"><use href="#search" /></svg><input placeholder="Search" aria-label="Search" /></label>
                    <svg width="9" height="9"><use href="#at" /></svg><svg width="9" height="9"><use href="#star" /></svg><svg width="7" height="8"><use href="#dots" /></svg>
                    <span class="gift"><svg width="9" height="9"><use href="#gift" /></svg></span>
                  </div>
                  <div class="day first"><b>Monday, June 17th</b></div>
                  <div class="day"><b>Yesterday</b></div>
                  <div class="msgs"><div class="mmask"></div><p>Ok! I've marked the reminder "check if any feedback to <i></i>" as complete.</p></div>
                  <div class="compose"><button aria-label="Attach"><svg width="6" height="6"><use href="#plus" /></svg></button><input placeholder="Message Slackbot" aria-label="Message Slackbot" /><svg width="8" height="8"><use href="#at" /></svg><svg width="8" height="8"><use href="#smile" /></svg></div>
                </div>
              </div>
            </div>
          </div>
        </div>
      </section>
    </div>
  </div>
</template>

<style>
html, body { margin: 0; background: #000; }
</style>

<style scoped>
* { box-sizing: border-box; }
svg { display: block; flex: none; }
button { border: 0; padding: 0; margin: 0; background: none; font: inherit; color: inherit; }
input { border: 0; padding: 0; background: none; font: inherit; color: inherit; min-width: 0; outline: 0; }
ul { list-style: none; margin: 0; padding: 0; }
p, h1, h2 { margin: 0; }
a { color: inherit; text-decoration: none; }
.sprite { position: absolute; width: 0; height: 0; }
.shell { min-height: 100vh; display: flex; flex-direction: column; background: #000; font-family: "Noto Sans", "Open Sans", sans-serif; color: #dfdbd2; overflow: hidden; }

.topbar { height: 27px; display: flex; align-items: center; background: linear-gradient(#58554d, #403f3a); font-size: 15px; font-weight: 600; line-height: 20px; }
.top-left { flex: 1 1 81px; display: flex; gap: 20px; padding-left: 12px; }
.app-menu { display: flex; align-items: center; gap: 5px; }
.top-right { flex: 1 1 0; display: flex; align-items: center; justify-content: flex-end; gap: 12px; padding-right: 14px; }
.temp { margin-left: -10px; font-size: 14px; }
.dbx { margin: 0 18px 0 13px; }
.sys { margin-left: -3px; }

.workspace { flex: 1; display: flex; }
.dock { width: 67px; display: flex; flex-direction: column; background: linear-gradient(#50383c, #4a343a 70%, #433338 93%, #3d3335); }
.dock-item { height: 64px; padding: 1px 3px 1px 2px; }
.tile { position: relative; height: 62px; display: flex; align-items: center; justify-content: center; border-radius: 4px; }
.tile.on { background: #67575b; }
.pips { position: absolute; left: 0; top: 0; bottom: 0; display: flex; flex-direction: column; justify-content: center; gap: 2px; }
.pips i { width: 6px; height: 6px; border-radius: 3px; background: #e95420; }
.apps { margin: auto 0 17px 18px; width: 30px; display: grid; grid-template-columns: repeat(3, 6px); gap: 6px; }
.apps i { height: 6px; border-radius: 3px; background: #eee; }

.viewer { flex: 1; min-width: 0; display: flex; flex-direction: column; }
.headbar { height: 40px; display: flex; align-items: center; background: linear-gradient(#3b3a36, #524f48); }
.side { flex: 1; display: flex; padding-left: 8px; }
.side.end { justify-content: flex-end; align-items: center; gap: 9px; padding: 0 8px 0 0; }
.headbar h1 { font-size: 14px; line-height: 20px; font-weight: 700; }
.zoomgroup { display: flex; width: 151px; height: 35px; border: 1px solid #33322e; border-radius: 4px; box-shadow: inset 0 0 0 1px #4e4c46; }
.zoomgroup button { width: 30px; display: flex; align-items: center; justify-content: center; }
.zoomgroup button:last-child { flex: 1; padding-left: 1px; }
.key { position: relative; width: 12px; height: 12px; border-radius: 1px; background: #e4e0d8; display: grid; place-items: center; }
.key b { grid-area: 1 / 1; width: 6px; height: 2px; background: #3c3b37; }
.key .v { width: 2px; height: 6px; }
.zoomsel { width: 86px; display: flex; align-items: center; background: #fbfbfb; padding: 0 8px 0 12px; color: #3b3b3b; }
.zoomsel select { flex: 1; appearance: none; border: 0; background: none; font: 14px/20px "Noto Sans", sans-serif; color: #4a4a4a; padding: 0; }
.hb { width: 33px; height: 35px; border: 1px solid #33322e; border-radius: 4px; box-shadow: inset 0 0 0 1px #4e4c46; display: flex; align-items: center; justify-content: center; }
.wm { display: flex; gap: 4px; border-left: 1px solid #3a3935; padding: 6px 0 6px 5px; }
.wm button { width: 16px; height: 16px; border-radius: 8px; background: linear-gradient(#8c887f, #66635b); box-shadow: 0 0 0 1px #38372f; }
.wm .x { background: linear-gradient(#f5764a, #df4a1a); }

.canvas { flex: 1; display: flex; align-items: flex-start; gap: 5px; padding: 184px 1px 0 0; text-rendering: geometricPrecision; }
.screen { position: relative; overflow: hidden; background: linear-gradient(to top right, #45002c, #76004a 25%, #ac0034 50%, #dc0018 75%, #ff2600); }
.left-screen { flex: 1058 1 0; height: 592px; min-width: 0; display: flex; flex-direction: column; }
.right-screen { flex: 789 1 0; height: 440px; margin-top: 205px; display: flex; justify-content: flex-end; min-width: 0; }
.art { position: absolute; inset: 0; width: 100%; height: 100%; }

.mini-top { position: relative; height: 11px; display: flex; align-items: center; background: rgba(70, 0, 20, .35); font-size: 6px; line-height: 8px; color: #fff; padding: 0 5px; }
.mt-l, .mt-r { flex: 1 1 0; display: flex; align-items: center; gap: 3px; }
.mt-l { flex-basis: 28px; }
.mt-l b:first-child { margin-right: 5px; }
.mt-r { justify-content: flex-end; gap: 5px; }
.mt-r b { margin-left: -4px; margin-right: 4px; }
.mt-r i { width: 2px; }
.desk { position: relative; flex: 1; display: flex; }
.mini-dock { width: 28px; background: rgba(60, 0, 50, .35); display: flex; flex-direction: column; justify-content: space-between; align-items: center; padding-bottom: 4px; color: #fff; }
.mini-dock ul { width: 100%; height: 318px; display: flex; flex-direction: column; }
.mini-dock li { flex: 1; display: flex; align-items: center; justify-content: center; margin: 0 1px; border-left: 2px solid transparent; border-right: 2px solid transparent; border-radius: 2px; }
.mini-dock .run { background: radial-gradient(circle at 1px 50%, #f0203a 1px, transparent 1px) border-box; }
.mini-dock .sel { background-color: rgba(255, 255, 255, .18); }
.desk-icons { width: 54px; padding-top: 8px; display: flex; flex-direction: column; gap: 4px; font-size: 6px; line-height: 7px; color: #f3dfe6; text-align: center; }
.desk-icons div { display: flex; flex-direction: column; align-items: center; gap: 1px; }
.desk-icons div:first-child { margin-bottom: 5px; }

.browser { position: absolute; left: 113px; right: 228px; top: 96px; height: 435px; background: #fff; border: 1px solid #b9bcc2; border-radius: 2px 2px 0 0; box-shadow: 0 2px 6px rgba(0, 0, 0, .5); display: flex; flex-direction: column; font: 6px/8px "Noto Sans", sans-serif; color: #5f6368; overflow: hidden; }
.tabs { height: 17px; display: flex; background: #dcdde2; padding-top: 3px; }
.tab { display: flex; align-items: center; gap: 3px; padding: 0 4px 2px 5px; border-right: 1px solid #a8abb0; white-space: nowrap; }
.tab:first-child { padding-left: 8px; }
.tab span { flex: 1; overflow: hidden; }
.tab.cur { background: #fff; border-radius: 3px 3px 0 0; border-right: 0; }
.tab:nth-child(2) { border-right: 0; }
.newtab { padding: 0 0 2px 6px; }
.wb { flex: 1; display: flex; justify-content: flex-end; align-items: center; gap: 9px; padding: 0 5px 3px 0; }
.mn { width: 4px; height: 1px; margin-top: 4px; background: #555; }
.mx { width: 5px; height: 4px; border: 1px solid #555; }
.addr { height: 16px; display: flex; align-items: center; gap: 6px; padding: 0 5px 1px 6px; }
.fwd { transform: rotate(180deg); color: #aaa; }
.pill { flex: 1; height: 11px; border-radius: 6px; background: #eff3f4; display: flex; align-items: center; gap: 4px; padding: 0 4px 0 5px; }
.pill span { flex: 1; }
.pill b { font-weight: 500; color: #333; }
.bl { color: #2a6ae0; }
.marks { height: 13px; display: grid; grid-template-columns: 30px 23px 40px 48px 62px 24px 36px 48px 62px 64px 47px 37px 62px 1fr auto; align-items: center; padding: 0 6px 2px; border-bottom: 1px solid #d9dbde; white-space: nowrap; }
.marks a { display: flex; align-items: center; gap: 3px; }
.dhead { height: 26px; display: flex; align-items: center; padding: 0 8px 0 9px; border-bottom: 1px solid #e4e4e4; }
.brand { width: 82px; padding-left: 4px; font: 10px/12px Roboto, sans-serif; }
.dsearch { width: 298px; height: 20px; border-radius: 3px; background: #f0f3f4; display: flex; align-items: center; gap: 8px; padding: 0 10px 0 7px; font: 7px/9px Roboto, sans-serif; }
.dsearch input { flex: 1; }
.dsearch input::placeholder { color: #80868b; }
.dicons { flex: 1; display: flex; justify-content: flex-end; gap: 10px; padding-right: 22px; }
.me { margin-left: 10px; border-radius: 7px; }
.dbody { flex: 1; min-height: 0; display: flex; font-family: Roboto, sans-serif; }
.dnav { width: 99px; padding-top: 4px; font-weight: 500; }
.new { width: 50px; height: 21px; margin: 0 0 5px 5px; border-radius: 11px; box-shadow: 0 1px 2px rgba(0, 0, 0, .35); display: flex; align-items: center; gap: 9px; padding-left: 7px; }
.dnav ul { height: 99px; display: flex; flex-direction: column; }
.dnav li { flex: 1; }
.dnav li, .nrow { display: flex; align-items: center; padding-left: 5px; }
.dnav li.act { background: #e1edfc; color: #2268df; border-radius: 0 8px 8px 0; }
.dnav i { width: 6px; }
.dnav .arr { height: 4px; width: 2px; margin-right: 4px; border: solid transparent; border-width: 2px 0 2px 2px; border-left-color: #444; }
.dnav li svg, .nrow svg { margin-right: 11px; }
.nrow { height: 23px; border-top: 1px solid #e2e2e2; }
.dnav ul + .nrow { margin-top: 4px; }
.nrow + .nrow { height: 24px; }
.quota { padding-left: 31px; display: flex; flex-direction: column; gap: 1px; font-weight: 400; white-space: nowrap; margin-top: -4px; }
.quota progress { appearance: none; width: 68px; height: 2px; border: 0; margin-bottom: 1px; }
.quota progress::-webkit-progress-bar { background: #e0e0e0; }
.quota progress::-webkit-progress-value { background: #3b78e7; }
.quota a { color: #2a78e4; font-weight: 500; }
.dmain { position: relative; flex: 1; min-width: 0; border-right: 1px solid #ddd; display: flex; flex-direction: column; }
.crumb { height: 20px; margin-left: 7px; border-bottom: 1px solid #e0e0e0; display: flex; align-items: center; gap: 11px; padding: 0 10px 0 4px; }
.crumb button { flex: 1; display: flex; align-items: center; gap: 4px; font-size: 8px; line-height: 10px; color: #3c4043; }
.dmain h2 { height: 21px; padding-left: 11px; font-size: 6px; line-height: 22px; font-weight: 400; }
.quick { height: 85px; display: flex; gap: 2px; padding-left: 2px; }
.blk { background: #000; }
.b1 { width: 115px; height: 85px; }
.b2 { width: 112px; height: 82px; }
.cards { display: flex; gap: 5px; padding-top: 1px; }
article { width: 106px; height: 80px; border: 1px solid #e2e2e2; border-radius: 3px; overflow: hidden; }
.thumb { position: relative; height: 50px; background: #f2f2f2; padding: 7px 7px 0; border-bottom: 1px solid #e4e4e4; }
.page { height: 100%; background: #fff; box-shadow: 0 0 2px rgba(0, 0, 0, .2); }
.thumb svg { position: absolute; inset: 0; width: 100%; height: 100%; }
.cap { height: 28px; padding: 5px 0 0 6px; white-space: nowrap; }
.cap p { display: flex; align-items: center; gap: 4px; }
.cap b { font-weight: 500; color: #3c4043; }
.cap small { display: block; font-size: 6px; line-height: 8px; margin-top: 2px; }
.act .cap { background: #e1edfc; }
.act .cap b { color: #1f66d8; }
.list { position: relative; margin: 0 32px 0 7px; }
table { width: 100%; table-layout: fixed; border-collapse: collapse; }
th { width: 83px; height: 20px; padding: 5px 0 0; text-align: left; font-weight: 500; font-size: 6px; line-height: 8px; }
th:first-child { width: 325px; }
th:nth-child(2) { width: 89px; }
th:last-child { width: auto; }
th svg { display: inline-block; margin-left: 3px; }
tbody { border-top: 1px solid #ddd; color: #8a8a8a; }
tbody td { height: 13px; padding: 0 0 0 7px; border-bottom: 1px solid #e2e2e2; }
tbody tr:nth-child(4n) td { height: 14px; }
.mask { position: absolute; left: 22px; right: 20px; top: 21px; height: 213px; background: #000; }
.thumbbar { position: absolute; right: 0; top: 20px; width: 4px; height: 160px; background: #c8c8c8; }
.dside { width: 24px; display: flex; flex-direction: column; align-items: center; gap: 15px; padding: 8px 0; }
.dside span { margin-top: auto; font-size: 10px; line-height: 10px; }

.slackwin { position: relative; width: 397px; display: flex; flex-direction: column; overflow: hidden; font: 6px/8px Lato, sans-serif; background: #fff; }
.smenu { position: relative; height: 16px; background: #3e3d38; padding: 7px 0 0 3px; font: 7px/9px "Noto Sans", sans-serif; color: #8f8d86; }
.smenu ul { display: flex; gap: 5px; }
.stitle { position: absolute; left: 183px; top: -6px; }
.swm { position: absolute; right: 4px; top: -3px; display: flex; gap: 2px; }
.swm i { width: 6px; height: 6px; border-radius: 3px; background: #77746c; }
.sbody { flex: 1; display: flex; min-height: 0; }
.teams { width: 29px; background: #2c0027; display: flex; flex-direction: column; align-items: center; padding-top: 6px; color: #7d6579; font-size: 5px; line-height: 7px; }
.teams div { position: relative; height: 30px; display: flex; flex-direction: column; align-items: center; gap: 1px; }
.teams .cur::before { content: ""; position: absolute; left: -7px; top: 0; width: 2px; height: 15px; background: #bfb3bd; }
.teams button { width: 15px; height: 15px; background: #66475f; color: #23001f; display: grid; place-items: center; }
.channels { width: 91px; background: #4c0042; color: #b99bb5; border-right: 1px solid #c9b5c7; font-size: 7px; line-height: 9px; }
.who { height: 24px; padding: 4px 7px 0 6px; }
.who div { display: flex; justify-content: space-between; align-items: center; }
.who b { color: #fff; }
em { font-style: normal; opacity: .7; }
.who p { display: flex; align-items: center; font-size: 6px; }
.dot { width: 4px; height: 4px; border-radius: 2px; background: #12b886; margin-right: 3px; }
.cmask { background: #000; }
.m1 { height: 226px; margin-right: 2px; }
.m2 { height: 98px; margin: 1px 4px 0 0; }
.ch { height: 11px; display: flex; align-items: center; padding: 0 5px 1px 6px; white-space: nowrap; }
.ch span { flex: 1; }
.bot { background: #005aa5; color: #fff; gap: 2px; }
.appsrow { margin-top: 5px; }
.chat { flex: 1; display: flex; flex-direction: column; color: #2c2d30; min-width: 0; }
.chead { height: 25px; display: flex; align-items: center; gap: 5px; padding-left: 8px; color: #717274; border-bottom: 1px solid #e4e4e4; }
.ct { flex: 1; padding-top: 2px; }
.ct b { font-size: 8px; line-height: 9px; font-weight: 900; color: #1d1c1d; display: block; }
.ct p { display: flex; align-items: center; gap: 2px; }
.ct u { width: 1px; height: 6px; background: #ccc; margin: 0 1px; }
.gr { color: #5ecb8a; }
.chead label { width: 86px; height: 15px; border: 1px solid #999; border-radius: 3px; display: flex; align-items: center; gap: 3px; padding-left: 3px; font-size: 7px; }
.chead label input { flex: 1; width: 40px; }
.gift { width: 13px; height: 13px; margin-left: -1px; background: #f2005c; color: #fff; border-radius: 2px 0 0 2px; padding: 2px; }
.day { height: 17px; display: flex; align-items: center; gap: 6px; font-size: 6px; }
.day::before, .day::after { content: ""; flex: 1; height: 1px; background: #e6e6e6; }
.day b { position: relative; font-weight: 900; background: #fff; }
.first { height: 10px; margin-top: -4px; }
.first::before { margin-left: 90px; }
.first::after { margin-right: 90px; }
.first + .day { margin-top: 6px; }
.msgs { flex: 1; padding: 3px 13px 0 8px; background: linear-gradient(#fff 290px, #f7f7f7 290px); margin-bottom: 6px; }
.mmask { height: 323px; background: #000; border: 1px solid #777; border-top-color: #999; }
.msgs p { padding: 4px 0 0 21px; display: flex; white-space: pre; font-size: 6px; line-height: 9px; }
.msgs i { width: 28px; height: 9px; background: #000; }
.compose { height: 18px; margin: 0 9px 9px 8px; border: 1px solid #888; border-radius: 3px; display: flex; align-items: center; gap: 5px; padding-right: 5px; color: #717274; font-size: 7px; }
.compose button { width: 17px; height: 16px; border-right: 1px solid #888; display: grid; place-items: center; }
.compose input { flex: 1; }
input::placeholder { color: #a5a5a7; }
</style>
